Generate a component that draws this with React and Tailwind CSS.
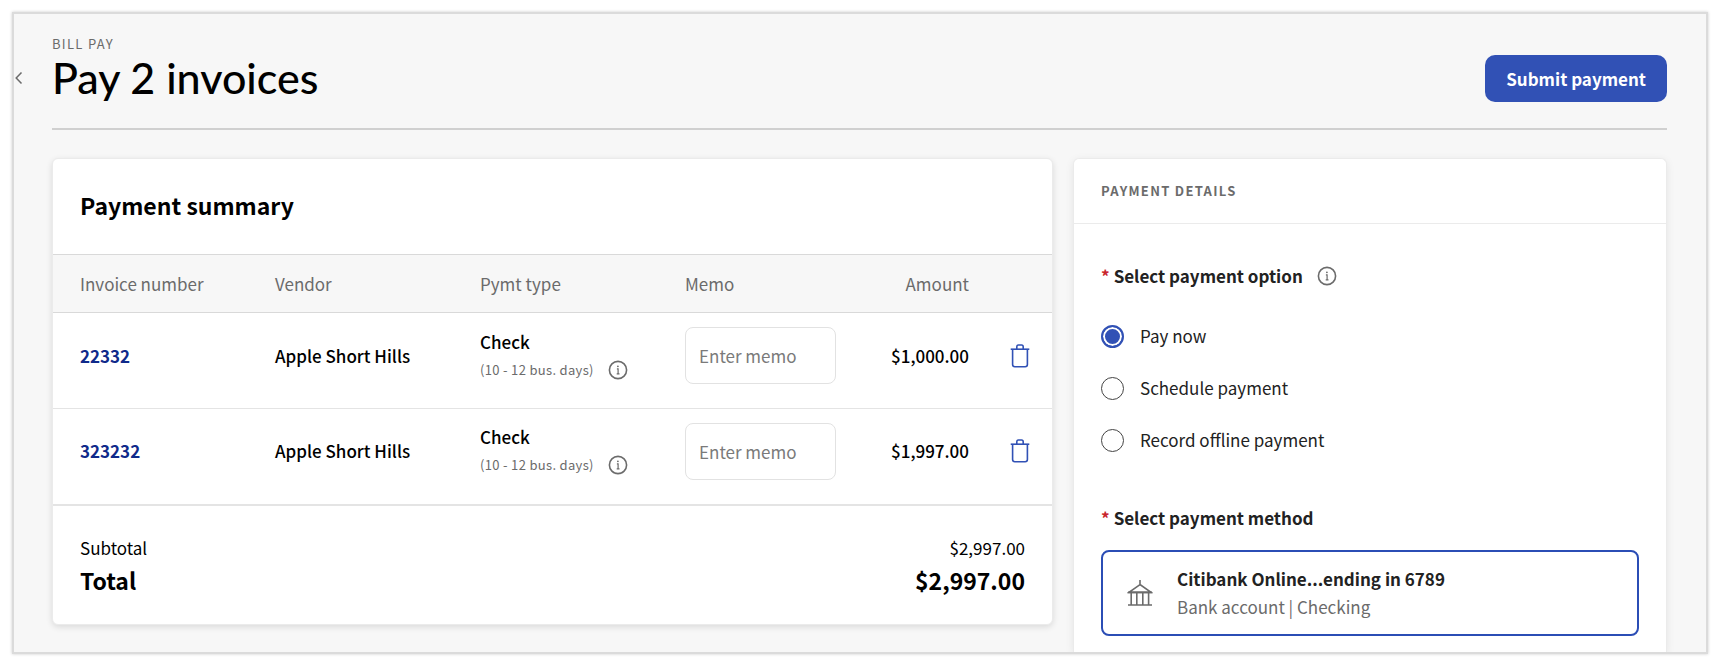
import { useState } from "react";

const invoices = [
  { number: "22332", vendor: "Apple Short Hills", amount: "$1,000.00" },
  { number: "323232", vendor: "Apple Short Hills", amount: "$1,997.00" },
];

const options = ["Pay now", "Schedule payment", "Record offline payment"];

function InfoIcon() {
  return (
    <svg viewBox="0 0 20 20" className="size-5 shrink-0" fill="none" stroke="#6b6b6b" aria-hidden="true">
      <circle cx="10" cy="10" r="8.6" strokeWidth="1.6" />
      <path d="M8.9 8.9h1.2v4.9M8.7 13.9h2.8" strokeWidth="1.2" />
      <circle cx="9.9" cy="6.3" r="0.9" fill="#6b6b6b" stroke="none" />
    </svg>
  );
}

function TrashIcon() {
  return (
    <svg viewBox="0 0 20 24" className="h-6 w-5" fill="none" stroke="#3151b5" strokeWidth="1.6" aria-hidden="true">
      <path d="M0.7 5.2h18.6" />
      <path d="M6.8 5V2.8Q6.8 1 8.4 1h3.2q1.6 0 1.6 1.8V5" />
      <path d="M2.6 5.2v15.4q0 2.2 2.2 2.2h10.4q2.2 0 2.2-2.2V5.2" />
    </svg>
  );
}

function BankIcon() {
  return (
    <svg viewBox="0 0 26 28" className="h-7 w-[26px] shrink-0" fill="none" stroke="#6b6b6b" strokeWidth="1.6" aria-hidden="true">
      <path d="M13 1v4.6M13 5.6L2 13.4h22z" />
      <path d="M4.2 13.4V26M9.8 13.4V26M15.8 13.4V26M21.6 13.4V26" />
      <path d="M1 26h24M1 13.4h24" />
    </svg>
  );
}

function Required({ children }) {
  return (
    <>
      <span className="mr-1 text-[#c9252d]">*</span>
      {children}
    </>
  );
}

function InvoiceTable() {
  return (
    <table className="w-full table-fixed text-left">
      <colgroup>
        <col className="w-[222px]" />
        <col className="w-[205px]" />
        <col className="w-[205px]" />
        <col className="w-[151px]" />
        <col />
        <col className="w-[83px]" />
      </colgroup>
      <thead>
        <tr className="h-[58px] border-y border-[#d9d9d9] bg-[#f7f7f7] text-[#6b6b6b]">
          <th className="pl-[27px] font-normal">Invoice number</th>
          <th className="font-normal">Vendor</th>
          <th className="font-normal">Pymt type</th>
          <th className="font-normal">Memo</th>
          <th className="text-right font-normal">Amount</th>
          <td />
        </tr>
      </thead>
      <tbody className="font-medium">
        {invoices.map((invoice) => (
          <tr key={invoice.number} className="h-24 border-b border-[#e4e4e4] last:border-b-2">
            <td className="pb-2.5 pl-[27px]">
              <a href="#invoice" className="font-bold text-[#0f2a8a]">
                {invoice.number}
              </a>
            </td>
            <td className="pb-2.5">{invoice.vendor}</td>
            <td className="pb-2.5">
              <div>Check</div>
              <div className="mt-1 flex items-center gap-3.5 text-[13px] leading-6 font-normal tracking-wide text-[#6b6b6b]">
                (10 - 12 bus. days)
                <InfoIcon />
              </div>
            </td>
            <td className="pb-2.5">
              <input
                type="text"
                aria-label={`Memo for invoice ${invoice.number}`}
                placeholder="Enter memo"
                className="block h-[57px] w-full rounded-lg border border-[#e2e2e2] bg-white px-[13px] font-normal placeholder:text-[#7a7a7a]"
              />
            </td>
            <td className="pb-2.5 text-right">{invoice.amount}</td>
            <td className="pb-2.5 pl-[41px]">
              <button type="button" aria-label={`Remove invoice ${invoice.number}`} className="block">
                <TrashIcon />
              </button>
            </td>
          </tr>
        ))}
      </tbody>
    </table>
  );
}

function PaymentDetails() {
  const [option, setOption] = useState("Pay now");

  return (
    <section className="rounded-t-md border border-b-0 border-[#ebebeb] bg-white text-[#222] shadow-[0_2px_8px_rgba(0,0,0,0.08)]">
      <h2 className="border-b border-[#ebebeb] px-[27px] py-5 text-[13px] leading-6 font-bold tracking-widest text-[#6b6b6b]">
        PAYMENT DETAILS
      </h2>
      <div className="px-[27px] pt-10 pb-2">
        <fieldset>
          <legend className="flex items-center gap-3.5 font-bold">
            <span>
              <Required>Select payment option</Required>
            </span>
            <InfoIcon />
          </legend>
          <div className="mt-9 flex flex-col gap-7">
            {options.map((label) => (
              <label key={label} className="flex items-center gap-4">
                <input
                  type="radio"
                  name="option"
                  checked={option === label}
                  onChange={() => setOption(label)}
                  className="size-[23px] appearance-none rounded-full border border-[#444] bg-white checked:border-2 checked:border-[#3151b5] checked:bg-[#3151b5] checked:shadow-[inset_0_0_0_2px_white]"
                />
                {label}
              </label>
            ))}
          </div>
        </fieldset>
        <h3 className="mt-[54px] font-bold">
          <Required>Select payment method</Required>
        </h3>
        <button
          type="button"
          className="mt-5 flex w-full items-center gap-6 rounded-lg border-2 border-[#2b4db5] px-6 py-[13px] text-left leading-7"
        >
          <BankIcon />
          <span>
            <span className="block font-bold">Citibank Online...ending in 6789</span>
            <span className="block text-[#6b6b6b]">Bank account | Checking</span>
          </span>
        </button>
      </div>
    </section>
  );
}

export default function App() {
  return (
    <div className="flex min-h-screen bg-white p-3 font-['Noto_Sans_CJK_SC',sans-serif] text-[17px] leading-6 text-black">
      <main className="relative flex grow flex-col overflow-hidden border-2 border-[#dbdbdb] bg-[#f7f7f7] pt-5 pr-[39px] pl-[38px] shadow-[0_0_3px_rgba(0,0,0,0.2)]">
        <header className="flex items-end justify-between border-b-2 border-[#d0d0d0] pb-[26px]">
          <div>
            <p className="text-[13px] leading-5 tracking-widest text-[#6b6b6b]">BILL PAY</p>
            <h1 className="font-['Lato'] text-[43px] leading-12 font-medium">Pay 2 invoices</h1>
          </div>
          <button type="button" className="rounded-[10px] bg-[#3151b5] px-[21px] py-3 leading-[23px] font-bold text-white">
            Submit payment
          </button>
        </header>
        <button type="button" aria-label="Back" className="absolute top-[57px] left-0 text-[#6b6b6b]">
          <svg viewBox="0 0 10 14" className="h-3.5 w-2.5" fill="none" stroke="currentColor" strokeWidth="1.5">
            <path d="M7.5 1.5L2.2 7l5.3 5.5" />
          </svg>
        </button>
        <div className="mt-7 grid grow grid-cols-[1001fr_594fr] gap-5">
          <section className="self-start rounded-md border border-[#ebebeb] bg-white shadow-[0_2px_6px_rgba(0,0,0,0.12)]">
            <h2 className="px-[27px] pt-[30px] pb-[33px] text-[23px] leading-8 font-bold">Payment summary</h2>
            <InvoiceTable />
            <dl className="grid grid-cols-2 gap-y-1 px-[27px] pt-[30px] pb-7">
              <dt>Subtotal</dt>
              <dd className="text-right">$2,997.00</dd>
              <dt className="text-[23px] leading-8 font-bold">Total</dt>
              <dd className="text-right text-[23px] leading-8 font-bold">$2,997.00</dd>
            </dl>
          </section>
          <PaymentDetails />
        </div>
      </main>
    </div>
  );
}
